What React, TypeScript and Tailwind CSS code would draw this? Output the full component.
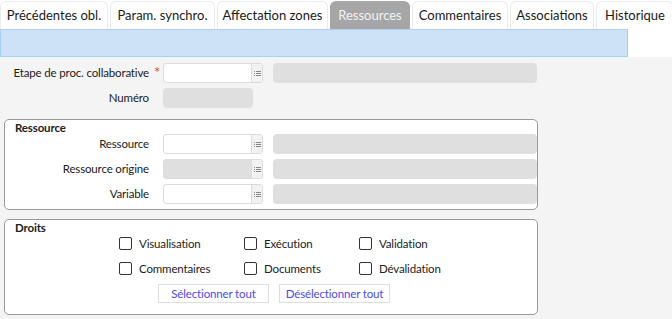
const tabs = [
  { label: "Précédentes obl.", w: "w-[108px]" },
  { label: "Param. synchro.", w: "w-[105px]" },
  { label: "Affectation zones", w: "w-[111px]" },
  { label: "Ressources", w: "w-[80px]", active: true },
  { label: "Commentaires", w: "w-[96px]" },
  { label: "Associations", w: "w-[84px]" },
  { label: "Historique", w: "w-[78px]" },
];

function ListButton() {
  return (
    <span className="flex w-[11px] items-center justify-center border-l border-[#dcdcdc] bg-[#f2f2f2]">
      <svg width="7" height="5" viewBox="0 0 7 5">
        <rect x="0" y="0" width="1" height="1" fill="#888" />
        <rect x="2" y="0" width="5" height="1" fill="#888" />
        <rect x="0" y="2" width="1" height="1" fill="#888" />
        <rect x="2" y="2" width="5" height="1" fill="#888" />
        <rect x="0" y="4" width="1" height="1" fill="#888" />
        <rect x="2" y="4" width="5" height="1" fill="#888" />
      </svg>
    </span>
  );
}

function Lookup({ disabled }: { disabled?: boolean }) {
  return (
    <div className="flex items-center gap-[10px]">
      <div
        className={`flex h-[20px] w-[100px] overflow-hidden rounded-[3px] border border-[#dcdcdc] ${
          disabled ? "bg-[#dfdfdf]" : "bg-white"
        }`}
      >
        <span className="flex-1" />
        <ListButton />
      </div>
      <div className="h-[20px] w-[264px] rounded-[4px] bg-[#dfdfdf]" />
    </div>
  );
}

function Row({ label, required, children }: { label: string; required?: boolean; children: React.ReactNode }) {
  return (
    <div className="flex h-[20px] items-center">
      <span className="w-[149px] whitespace-nowrap text-right">{label}</span>
      <span className="h-[20px] w-[14px] pl-[5px] text-[15px] leading-[18px] text-[#e8463c]">
        {required ? "*" : ""}
      </span>
      {children}
    </div>
  );
}

function Check({ label }: { label: string }) {
  return (
    <label className="flex h-[13px] items-center gap-[7px] whitespace-nowrap">
      <span className="h-[13px] w-[13px] shrink-0 rounded-[2px] border border-[#333] bg-white" />
      <span>{label}</span>
    </label>
  );
}

export default function App() {
  return (
    <div
      className="h-[319px] w-[672px] overflow-hidden bg-[#f4f4f4] text-[11.5px] tracking-[-0.15px] text-[#222]"
      style={{ fontFamily: "Lato, 'Open Sans', sans-serif" }}
    >
      <div className="flex h-[29px] gap-[2px] bg-white pt-[1px] text-[13px] tracking-normal">
        {tabs.map((t) => (
          <div
            key={t.label}
            className={`flex shrink-0 items-center justify-center whitespace-nowrap rounded-t-[6px] border border-b-0 ${t.w} ${
              t.active ? "border-[#a6a6a6] bg-[#a6a6a6] text-[#f2f2f2]" : "border-[#ebebeb] bg-white text-[#1a1a1a]"
            }`}
          >
            {t.label}
          </div>
        ))}
      </div>

      <div className="flex bg-white">
        <div className="h-[28px] w-[628px] border border-[#a9d0f5] bg-[#cde2f6]" />
      </div>

      <div className="flex flex-col gap-[5px] pt-[6px]">
        <Row label="Etape de proc. collaborative" required>
          <Lookup />
        </Row>
        <Row label="Numéro">
          <div className="h-[20px] w-[90px] rounded-[4px] bg-[#dfdfdf]" />
        </Row>
      </div>

      <div className="ml-[4px] mt-[11px] flex h-[91px] w-[534px] flex-col rounded-[5px] border border-[#9a9a9a] bg-white">
        <div className="h-[14px] pl-[10px] pt-[1px] font-bold leading-[13px] text-[#222]">Ressource</div>
        <div className="-ml-[5px] flex flex-col gap-[5px]">
          <Row label="Ressource">
            <Lookup />
          </Row>
          <Row label="Ressource origine">
            <Lookup disabled />
          </Row>
          <Row label="Variable">
            <Lookup />
          </Row>
        </div>
      </div>

      <div className="ml-[4px] mt-[9px] flex h-[96px] w-[534px] flex-col rounded-[5px] border border-[#9a9a9a] bg-white">
        <div className="h-[14px] pl-[10px] pt-[1px] font-bold leading-[13px] text-[#222]">Droits</div>
        <div className="ml-[114px] mt-[3px] grid w-[340px] grid-cols-[125px_115px_100px] gap-y-[12px]">
          <Check label="Visualisation" />
          <Check label="Exécution" />
          <Check label="Validation" />
          <Check label="Commentaires" />
          <Check label="Documents" />
          <Check label="Dévalidation" />
        </div>
        <div className="ml-[153px] mt-[9px] flex gap-[10px] text-[#4b4bf0]">
          <button className="h-[19px] w-[111px] border border-[#dedede] bg-white leading-[17px]">Sélectionner tout</button>
          <button className="h-[19px] w-[111px] border border-[#dedede] bg-white leading-[17px]">Désélectionner tout</button>
        </div>
      </div>
    </div>
  );
}
